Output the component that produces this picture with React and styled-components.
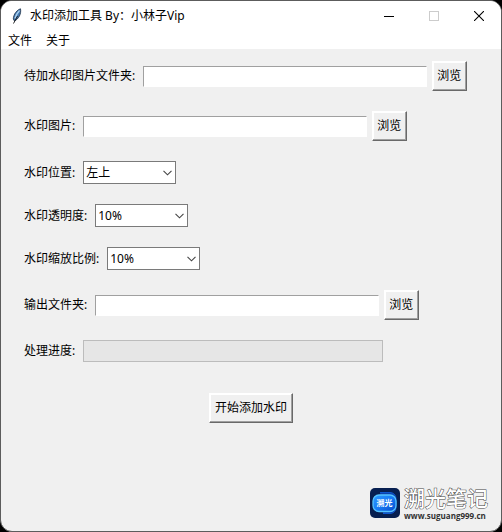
import React, { useState } from 'react'
import styled, { createGlobalStyle } from 'styled-components'

const GlobalStyle = createGlobalStyle`
	* {
		box-sizing: border-box;
	}

	body {
		margin: 0;
		background: #000;
		color: #000;
		font-family: 'Noto Sans', 'Noto Sans CJK SC', sans-serif;
		font-size: 12px;
		line-height: 16px;
	}

	button,
	input,
	select {
		margin: 0;
		color: inherit;
		font: inherit;
	}
`

const Window = styled.div`
	display: flex;
	flex-direction: column;
	min-height: 100vh;
	background: #f0f0f0;
	border: 1px solid #5c5c5c;
	border-radius: 12px;
	overflow: hidden;
`

const TitleBar = styled.header`
	display: flex;
	align-items: center;
	height: 29px;
	padding-left: 8px;
	background: #fff;
`

const Title = styled.h1`
	flex: 1;
	margin: 0 0 0 5px;
	font-size: 12px;
	font-weight: normal;
`

const WindowButton = styled.button`
	display: flex;
	align-items: center;
	justify-content: center;
	width: 45px;
	height: 29px;
	padding: 0;
	border: 0;
	background: none;
	color: ${props => (props.disabled ? '#ccc' : '#000')};
`

const MenuBar = styled.nav`
	display: flex;
	gap: 14px;
	height: 19px;
	padding: 0 7px;
	background: #fff;
`

const MenuItem = styled.button`
	padding: 0;
	border: 0;
	background: none;
	line-height: 22px;
`

const Form = styled.form`
	display: flex;
	flex-direction: column;
	gap: 20px;
	padding: 12px 23px 0;
`

const Row = styled.div`
	display: flex;
	align-items: center;
`

const Label = styled.label`
	margin-right: 8px;
	white-space: nowrap;
`

const TextInput = styled.input`
	width: 284px;
	min-width: 0;
	height: 21px;
	margin-right: 5px;
	padding: 1px 2px;
	border: 1px solid;
	border-color: #a0a0a0 #fff #fff #a0a0a0;
	border-radius: 0;
	background: #fff;
	outline: none;
`

const Button = styled.button`
	flex: none;
	height: 30px;
	padding: 0 4px 0 3px;
	border: 1px solid;
	border-color: #fff #696969 #696969 #fff;
	background: #f0f0f0;
	box-shadow: inset -1px -1px #a0a0a0, inset 1px 1px #fff;
	white-space: nowrap;
	border-width: 1px;
	min-width: 35px;
`

const StartButton = styled(Button)`
	align-self: center;
	margin-top: 11px;
	padding: 0 5px;
`

const SelectBox = styled.span`
	display: grid;
	align-items: center;
	width: 93px;

	> * {
		grid-area: 1 / 1;
	}

	> svg {
		justify-self: end;
		margin-right: 4px;
		pointer-events: none;
	}
`

const Select = styled.select`
	width: 100%;
	height: 23px;
	padding: 0 20px 0 2px;
	border: 1px solid #7a7a7a;
	border-radius: 0;
	background: #fff;
	appearance: none;
	outline: none;
`

const Progress = styled.progress`
	width: 300px;
	min-width: 0;
	height: 22px;
	border: 1px solid #bcbcbc;
	background: #e6e6e6;
	appearance: none;

	&::-webkit-progress-bar {
		background: #e6e6e6;
	}

	&::-webkit-progress-value {
		background: #06b025;
	}
`

const Brand = styled.footer`
	display: flex;
	align-items: center;
	justify-content: flex-end;
	gap: 4px;
	margin-top: auto;
	padding: 0 13px 10px;
`

const BrandText = styled.div`
	display: flex;
	flex-direction: column;
`

const BrandName = styled.span`
	color: #fff;
	font-size: 21px;
	font-weight: 500;
	line-height: 26px;
	paint-order: stroke;
	-webkit-text-stroke: 1px #444;
`

const BrandUrl = styled.a`
	color: #333;
	font-family: 'Open Sans', sans-serif;
	font-size: 8px;
	font-weight: bold;
	line-height: 10px;
	text-decoration: none;
`

const FeatherIcon = () => (
	<svg width="16" height="16" viewBox="0 0 16 16" aria-hidden="true">
		<path d="M11.500 0.800C8 2 4.500 6 4.300 11l1.200 2C9.500 11 12.500 6 11.500 0.800z" fill="#4579b0" stroke="#1d2f45" strokeWidth="0.800" />
		<path d="M10.500 2.500C8.500 4.500 7 7.500 6 10.500" fill="none" stroke="#a9d0f0" strokeWidth="1.400" />
		<path d="M8.500 8L4.500 15.500" fill="none" stroke="#111" strokeWidth="0.900" />
	</svg>
)

const ChevronIcon = () => (
	<svg width="9" height="6" viewBox="0 0 9 6" aria-hidden="true">
		<path d="M0.500 0.800l4 4 4-4" fill="none" stroke="#444" strokeWidth="1.100" />
	</svg>
)

const BrandLogo = () => (
	<svg width="30" height="30" viewBox="0 0 30 30" aria-hidden="true">
		<defs>
			<linearGradient id="badge" x1="0" y1="0" x2="1" y2="1">
				<stop offset="0" stopColor="#2f9bff" />
				<stop offset="0.500" stopColor="#167bf5" />
				<stop offset="1" stopColor="#0648c9" />
			</linearGradient>
		</defs>
		<rect width="30" height="30" rx="5" fill="#071f50" />
		<path d="M10 4.500h10a6 6 0 0 1 6 6v9a6 6 0 0 1-6 6h-7" fill="#0b43ae" stroke="#0d56d0" strokeWidth="1" />
		<rect x="3" y="7" width="23" height="16.500" rx="6" fill="url(#badge)" stroke="#55c4ff" strokeWidth="1.300" />
		<text x="14.500" y="18" textAnchor="middle" fontSize="8" fontWeight="bold" fill="#fff">
			溯光
		</text>
	</svg>
)

const percents = ['10%', '20%', '30%', '40%', '50%', '60%', '70%', '80%', '90%', '100%']

const FolderRow = ({ id, label }) => {
	const [path, setPath] = useState('')
	return (
		<Row>
			<Label htmlFor={id}>{label}</Label>
			<TextInput id={id} type="text" value={path} onChange={e => setPath(e.target.value)} />
			<Button type="button">浏览</Button>
		</Row>
	)
}

const SelectRow = ({ id, label, options }) => {
	const [value, setValue] = useState(options[0])
	return (
		<Row>
			<Label htmlFor={id}>{label}</Label>
			<SelectBox>
				<Select id={id} value={value} onChange={e => setValue(e.target.value)}>
					{options.map(option => <option key={option}>{option}</option>)}
				</Select>
				<ChevronIcon />
			</SelectBox>
		</Row>
	)
}

const App = () => (
	<Window>
		<GlobalStyle />
		<TitleBar>
			<FeatherIcon />
			<Title>水印添加工具 By：小林子Vip</Title>
			<WindowButton type="button" aria-label="最小化">
				<svg width="10" height="10" viewBox="0 0 10 10">
					<path d="M0 5.500h10" stroke="currentColor" />
				</svg>
			</WindowButton>
			<WindowButton type="button" aria-label="最大化" disabled>
				<svg width="10" height="10" viewBox="0 0 10 10">
					<rect x="0.500" y="0.500" width="9" height="9" fill="none" stroke="currentColor" />
				</svg>
			</WindowButton>
			<WindowButton type="button" aria-label="关闭">
				<svg width="10" height="10" viewBox="0 0 10 10">
					<path d="M0 0l10 10M10 0L0 10" stroke="currentColor" strokeWidth="1.100" />
				</svg>
			</WindowButton>
		</TitleBar>
		<MenuBar>
			<MenuItem type="button">文件</MenuItem>
			<MenuItem type="button">关于</MenuItem>
		</MenuBar>
		<Form onSubmit={e => e.preventDefault()}>
			<FolderRow id="source" label="待加水印图片文件夹:" />
			<FolderRow id="mark" label="水印图片:" />
			<SelectRow id="position" label="水印位置:" options={['左上', '右上', '左下', '右下', '居中']} />
			<SelectRow id="opacity" label="水印透明度:" options={percents} />
			<SelectRow id="scale" label="水印缩放比例:" options={percents} />
			<FolderRow id="output" label="输出文件夹:" />
			<Row>
				<Label htmlFor="progress">处理进度:</Label>
				<Progress id="progress" value={0} max={100} />
			</Row>
			<StartButton type="submit">开始添加水印</StartButton>
		</Form>
		<Brand>
			<BrandLogo />
			<BrandText>
				<BrandName>溯光笔记</BrandName>
				<BrandUrl href="#">www.suguang999.cn</BrandUrl>
			</BrandText>
		</Brand>
	</Window>
)

export default App
